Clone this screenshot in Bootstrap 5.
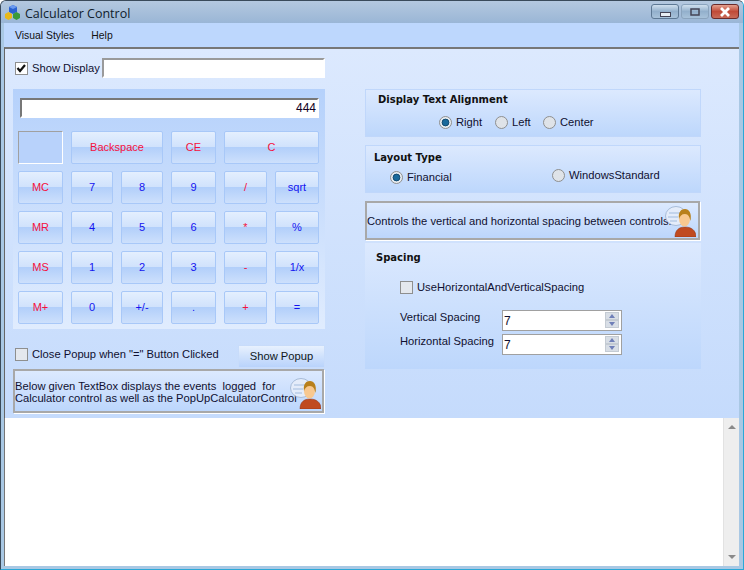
<!DOCTYPE html>
<html lang="en">
<head>
    <meta charset="UTF-8">
    <title>Calculator Control</title>
    <link rel="stylesheet" href="https://cdn.jsdelivr.net/npm/bootstrap@5.3.3/dist/css/bootstrap.min.css">
    <style>
        html, body { height: 100%; margin: 0; }
        body { font-family: "Liberation Sans", Arial, sans-serif; font-size: 11.2px; line-height: 17px; color: #101030; background: #fff; overflow: hidden; }
        .app-window { width: 744px; height: 570px; border: 1px solid #3a4a5a; border-right-color: #2aa8d8; border-bottom-color: #2aa8d8; border-radius: 6px 6px 0 0; background: #a9c8e4; overflow: hidden; }
        .title-bar { height: 22px; background: linear-gradient(#b4c8df, #9ab6d6); font-family: "Open Sans", sans-serif; font-size: 12.5px; color: #10202c; padding-left: 4px; }
        .win-btns { gap: 2px; margin-top: 3px; margin-right: 4px; }
        .win-btn { width: 28px; height: 15px; border: 1px solid #5d7894; border-radius: 3px; background: linear-gradient(#cfdfee, #93b0cc 50%, #a8c2da); }
        .win-btn.is-faded { border-color: #8aa3bd; }
        .win-btn.is-close { border-color: #6a2a2a; background: linear-gradient(#e4a08f, #c04a38 50%, #c86a58); }
        .menu-bar { height: 24px; background: #bdd7fd; padding-left: 11px; gap: 17px; color: #111; font-size: 10.4px; }
        .app-body { margin: 0 4px 0 3px; }
        .top-pane { height: 371px; border-top: 2px solid #777; border-left: 1px solid #666; background: linear-gradient(#dce9fe, #c5dbfc); padding: 9px 0 0 8px; }
        .left-col { width: 312px; }
        .right-col { width: 336px; margin-left: 40px; padding-top: 31px; }
        .show-row { height: 20px; padding-left: 2px; white-space: nowrap; }
        .sys-input { border: 2px solid; border-color: #9a9a9a #fff #fff #9a9a9a; background: #fff; height: 20px; font-size: 12px; color: #102; line-height: 16px; }
        .show-input { width: 223px; margin-left: 2px; flex: none; }
        .calc-panel { margin-top: 11px; height: 240px; padding: 9px 7px 0 5px; background: linear-gradient(#b5d1fb, #e0ecfe); }
        .calc-display { width: 299px; margin-left: 2px; text-align: right; padding-right: 1px; border-color: #777 #fff #fff #777; }
        .calc-grid { display: grid; grid-template-columns: 45px 42px 42px 45px 43px 44px; grid-auto-rows: 33px; gap: 7px 8px; margin-top: 13px; }
        .calc-key { border: 1px solid #a8c8f8; border-radius: 2px; background: linear-gradient(#e4effe, #d0e2fc 48%, #b2cffa 50%, #cde0fc); padding: 0; font-size: 11px; color: #1414f0; line-height: 1; }
        .calc-key.is-red { color: #f5103c; }
        .calc-key.is-wide2 { grid-column: span 2; }
        .calc-blank { border: 1px solid; border-color: #a0a0a0 #fff #fff #a0a0a0; background: #b8d2fb; }
        .app-check.form-check-input { width: 13px; height: 13px; margin: 0 4px 0 0; border: 1px solid #8e8f8f; border-radius: 0; background-color: #e4e8ee; flex: none; }
        .app-check.form-check-input:checked { background-color: #fff; background-size: 13px; background-image: url("data:image/svg+xml,%3csvg xmlns='http://www.w3.org/2000/svg' viewBox='0 0 13 13'%3e%3cpath fill='none' stroke='%23111' stroke-width='2.2' d='M2.5 6l2.5 3L10 3'/%3e%3c/svg%3e"); }
        .app-radio.form-check-input { width: 13px; height: 13px; margin: 0 4px 0 0; border: 1px solid #8e8f8f; background-color: #dfe3e8; flex: none; }
        .app-radio.form-check-input:checked { background-color: #e8edf2; background-size: 13px; background-image: url("data:image/svg+xml,%3csvg xmlns='http://www.w3.org/2000/svg' viewBox='0 0 13 13'%3e%3ccircle cx='6.5' cy='6.5' r='3.4' fill='%231a6a9c' stroke='%23134a70'/%3e%3c/svg%3e"); }
        .popup-row { height: 24px; margin-top: 16px; padding-left: 2px; }
        .popup-check { margin-top: 1px; }
        .popup-btn { width: 87px; height: 23px; border: 1px solid #c8dcfa; background: linear-gradient(#e8f1fe, #cfe1fc 50%, #b9d3fb); color: #101820; font-size: 11.2px; padding: 0; border-radius: 0; }
        .info-box { border: 2px solid #a8a8a8; box-shadow: 1px 1px 0 #fff; background: linear-gradient(#dce9fe, #bcd6fc); line-height: 12px; position: relative; white-space: nowrap; }
        .left-info { height: 44px; padding: 9px 0 0 0; width: 311px; }
        .person-icon { position: absolute; width: 31px; height: 31px; }
        .left-info .person-icon { right: 1px; top: 7px; }
        .spacing-info .person-icon { right: 2px; top: 3px; }
        .option-group { background: linear-gradient(#dce9fe, #bdd7fc); border: 1px solid #c0d7fb; }
        .group-title { font-family: "DejaVu Sans", sans-serif; font-weight: 700; font-size: 10px; line-height: 14px; color: #111; }
        .align-group { height: 48px; padding: 3px 0 0 12px; }
        .align-options { padding-left: 61px; margin-top: 7px; }
        .lbl-right { width: 39px; }
        .lbl-left { width: 31px; }
        .layout-group { height: 48px; margin-top: 8px; padding: 5px 0 0 8px; }
        .layout-options { padding-left: 16px; margin-top: 4px; }
        .lbl-financial { width: 145px; }
        .windows-option { margin-top: -4px; }
        .spacing-info { height: 39px; margin-top: 8px; padding: 12px 0 0 0; width: 335px; }
        .spacing-group { height: 126px; margin-top: 3px; padding: 8px 0 0 11px; border: 0; }
        .use-spacing { margin: 14px 0 0 24px; }
        .spin-first { margin: 12px 0 0 24px; }
        .spin-second { margin: 1px 0 0 24px; }
        .spin-box { width: 120px; height: 21px; border: 1px solid #a0a0a0; background: #fff; padding: 2px 0 0 1px; margin-top: 2px; font-size: 12px; }
        .spin-arrows { margin: -1px 2px 0 0; width: 14px; }
        .spin-arrows i { display: block; height: 8px; background: #d8dee6; border: 1px solid #c4cbd3; position: relative; }
        .spin-arrows i::after { content: ""; position: absolute; left: 3px; top: 1px; border: 3px solid transparent; border-top: 0; border-bottom: 4px solid #6f7fb8; }
        .spin-arrows i.down::after { border-bottom: 0; border-top: 4px solid #6f7fb8; }
        .spin-label { width: 102px; white-space: nowrap; margin-top: 1px; }
        .log-pane { height: 148px; background: #fff; border-left: 1px solid #777; }
        .log-scroll { width: 16px; background: #eeeeee; border-left: 1px solid #e2e2e2; padding: 7px 0; }
        .scroll-up { border: 4px solid transparent; border-top: 0; border-bottom: 4px solid #8a8a8a; }
        .scroll-down { border: 4px solid transparent; border-bottom: 0; border-top: 4px solid #8a8a8a; }
    </style>
</head>
<body>
    <div class="app-window d-flex flex-column">
        <div class="title-bar d-flex align-items-start flex-shrink-0">
            <svg width="16" height="16" viewBox="0 0 16 16" class="me-1 mt-1">
                <path d="M4 2l4-2 4 2v5l-4 2-4-2z" fill="#2a62d0"/>
                <path d="M4 2l4 2 4-2-4-2z" fill="#6a9af0"/>
                <path d="M0 9l3.5-2L7 9v4l-3.5 2L0 13z" fill="#e8b818"/>
                <path d="M8 9l3.5-2L15 9v4l-3.5 2L8 13z" fill="#3a9a3a"/>
            </svg>
            <span class="flex-grow-1 mt-1">Calculator Control</span>
            <div class="win-btns d-flex">
                <div class="win-btn d-flex align-items-end justify-content-center"><svg width="11" height="6"><rect x="0.5" y="0.5" width="10" height="4" fill="#e8eef4" stroke="#445"/></svg></div>
                <div class="win-btn is-faded d-flex align-items-center justify-content-center"><svg width="10" height="8"><rect x="1" y="1" width="8" height="6" fill="none" stroke="#445" stroke-width="1.5"/></svg></div>
                <div class="win-btn is-close d-flex align-items-center justify-content-center"><svg width="12" height="10"><path d="M2 1l8 8M10 1l-8 8" stroke="#fff" stroke-width="2.8"/></svg></div>
            </div>
        </div>
        <div class="app-body d-flex flex-column flex-grow-1">
            <div class="menu-bar d-flex align-items-center flex-shrink-0"><span>Visual Styles</span><span>Help</span></div>
            <div class="top-pane d-flex">
                <div class="left-col">
                    <div class="show-row d-flex align-items-center">
                        <input class="form-check-input app-check" type="checkbox" checked>
                        <span>Show Display</span>
                        <div class="sys-input show-input"></div>
                    </div>
                    <div class="calc-panel">
                        <div class="sys-input calc-display">444</div>
                        <div class="calc-grid" id="calcGrid"></div>
                    </div>
                    <div class="popup-row d-flex justify-content-between align-items-start">
                        <div class="popup-check d-flex align-items-center"><input class="form-check-input app-check" type="checkbox"><span>Close Popup when "=" Button Clicked</span></div>
                        <button class="btn popup-btn" type="button">Show Popup</button>
                    </div>
                    <div class="info-box left-info">
                        Below given TextBox displays the events &nbsp;logged &nbsp;for<br>Calculator control as well as the PopUpCalculatorControl
                        <svg class="person-icon" viewBox="0 0 31 31"><use href="#personGlyph"/></svg>
                    </div>
                </div>
                <div class="right-col">
                    <div class="option-group align-group">
                        <div class="group-title">Display Text Alignment</div>
                        <div class="align-options d-flex align-items-center">
                            <input class="form-check-input app-radio" type="radio" name="alignGroup" checked><span class="lbl-right">Right</span>
                            <input class="form-check-input app-radio" type="radio" name="alignGroup"><span class="lbl-left">Left</span>
                            <input class="form-check-input app-radio" type="radio" name="alignGroup"><span>Center</span>
                        </div>
                    </div>
                    <div class="option-group layout-group">
                        <div class="group-title">Layout Type</div>
                        <div class="layout-options d-flex align-items-center">
                            <input class="form-check-input app-radio" type="radio" name="layoutGroup" checked><span class="lbl-financial">Financial</span>
                            <div class="windows-option d-flex align-items-center"><input class="form-check-input app-radio" type="radio" name="layoutGroup"><span>WindowsStandard</span></div>
                        </div>
                    </div>
                    <div class="info-box spacing-info">
                        Controls the vertical and horizontal spacing between controls.
                        <svg class="person-icon" viewBox="0 0 31 31"><use href="#personGlyph"/></svg>
                    </div>
                    <div class="option-group spacing-group">
                        <div class="group-title">Spacing</div>
                        <div class="use-spacing d-flex align-items-center"><input class="form-check-input app-check" type="checkbox"><span>UseHorizontalAndVerticalSpacing</span></div>
                        <div class="spin-first d-flex align-items-start">
                            <span class="spin-label">Vertical Spacing</span>
                            <div class="spin-box d-flex justify-content-between">7<div class="spin-arrows"><i></i><i class="down"></i></div></div>
                        </div>
                        <div class="spin-second d-flex align-items-start">
                            <span class="spin-label">Horizontal Spacing</span>
                            <div class="spin-box d-flex justify-content-between">7<div class="spin-arrows"><i></i><i class="down"></i></div></div>
                        </div>
                    </div>
                </div>
            </div>
            <div class="log-pane d-flex justify-content-end">
                <div class="log-scroll d-flex flex-column align-items-center justify-content-between">
                    <div class="scroll-up"></div>
                    <div class="scroll-down"></div>
                </div>
            </div>
        </div>
    </div>

    <svg width="0" height="0" class="position-absolute">
        <defs>
            <g id="personGlyph">
                <ellipse cx="11" cy="10" rx="10.5" ry="9.5" fill="#e4ecfa" stroke="#a8bcd8"/>
                <path d="M4 7h11M3 11h10M5 15h7" stroke="#b8cce8" stroke-width="1.5"/>
                <path d="M10 31c0-7 4-10 10-10s11 3 11 10z" fill="#c04a20" stroke="#8a3010" stroke-width="0.5"/>
                <ellipse cx="19.5" cy="13" rx="5.5" ry="7.5" fill="#f8c890"/>
                <path d="M14 13c-1-7 2-10 6-10s7 4 5.5 12c-1-4-2-7-5.5-7s-5 2-6 5z" fill="#b8801c"/>
            </g>
        </defs>
    </svg>

    <script>
        // teclas da calculadora: [texto, vermelho, largura]
        const teclas = [
            [null], ["Backspace", 1, 2], ["CE", 1], ["C", 1, 2],
            ["MC", 1], ["7"], ["8"], ["9"], ["/", 1], ["sqrt"],
            ["MR", 1], ["4"], ["5"], ["6"], ["*", 1], ["%"],
            ["MS", 1], ["1"], ["2"], ["3"], ["-", 1], ["1/x"],
            ["M+", 1], ["0"], ["+/-"], ["."], ["+", 1], ["="]
        ]
        let listaHtml = ''
        teclas.forEach(t => {
            if (t[0] === null) { listaHtml += '<div class="calc-blank"></div>'; return }
            listaHtml += `<button type="button" class="btn calc-key ${t[1] ? 'is-red' : ''} ${t[2] ? 'is-wide2' : ''}">${t[0]}</button>`
        })
        document.querySelector("#calcGrid").innerHTML = listaHtml
    </script>
    <script src="https://cdn.jsdelivr.net/npm/bootstrap@5.3.3/dist/js/bootstrap.bundle.min.js"></script>
</body>
</html>
